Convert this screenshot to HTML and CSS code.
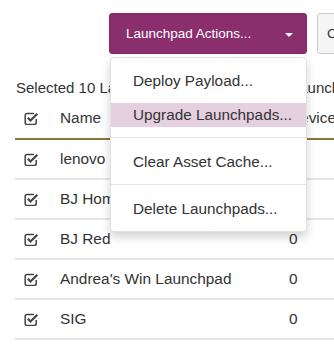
FILE: index.html
```html
<!DOCTYPE html>
<html lang="en">
<head>
    <meta charset="UTF-8">
    <title>Launchpads</title>
    <link rel="stylesheet" href="styles.css">
</head>
<body>
    <div class="page">
        <div class="toolbar">
            <div class="actions">
                <button class="btn btn-primary">
                    <span class="btn-label">Launchpad Actions...</span>
                    <span class="caret"></span>
                </button>
                <ul class="menu">
                    <li class="menu-item">Deploy Payload...</li>
                    <li class="menu-item active">Upgrade Launchpads...</li>
                    <li class="divider"></li>
                    <li class="menu-item">Clear Asset Cache...</li>
                    <li class="divider"></li>
                    <li class="menu-item">Delete Launchpads...</li>
                </ul>
            </div>
            <button class="btn btn-default">Columns</button>
        </div>

        <p class="status">Selected 10 Launchpads. Select all 1157 Launchpads</p>

        <table class="grid">
            <thead>
                <tr>
                    <th class="col-check"><span class="check"></span></th>
                    <th class="col-name">Name</th>
                    <th class="col-num">Devices</th>
                </tr>
            </thead>
            <tbody>
                <tr><td class="col-check"><span class="check"></span></td><td>lenovo</td><td>0</td></tr>
                <tr><td class="col-check"><span class="check"></span></td><td>BJ Home</td><td>0</td></tr>
                <tr><td class="col-check"><span class="check"></span></td><td>BJ Red</td><td>0</td></tr>
                <tr><td class="col-check"><span class="check"></span></td><td>Andrea's Win Launchpad</td><td>0</td></tr>
                <tr><td class="col-check"><span class="check"></span></td><td>SIG</td><td>0</td></tr>
            </tbody>
        </table>
    </div>

    <script>
        // checkbox glyph, same for every row
        const checkSvg = '<svg width="15" height="13" viewBox="0 0 15 13">' +
            '<path d="M10 1.5H3a1.8 1.8 0 0 0-1.8 1.8v7.4a1.8 1.8 0 0 0 1.8 1.8h7.4a1.8 1.8 0 0 0 1.8-1.8V7" fill="none" stroke="#444" stroke-width="1.5"/>' +
            '<path d="M3.8 5.8l2.7 2.7 6.8-6.8" fill="none" stroke="#444" stroke-width="2.2"/>' +
            '</svg>';
        document.querySelectorAll('.check').forEach(el => el.innerHTML = checkSvg);
    </script>
</body>
</html>
```

FILE: styles.css
```css
* {
    margin: 0;
    padding: 0;
    box-sizing: border-box;
}

body {
    font-family: 'Liberation Sans', Arial, sans-serif;
    color: #333;
    background: #fff;
    overflow: hidden;
}

.page {
    padding-top: 13px;
}

.toolbar {
    display: flex;
    gap: 10px;
    padding-left: 109px;
}

.actions {
    position: relative;
}

.btn {
    height: 41px;
    border-radius: 3px;
    font-family: 'Liberation Sans', Arial, sans-serif;
    font-size: 13.5px;
    white-space: nowrap;
}

.btn-primary {
    width: 198px;
    display: flex;
    align-items: center;
    padding: 0 13px 0 16px;
    background: #8a2e6d;
    border: 1px solid #832a67;
    color: #fff;
}

.btn-label {
    flex: 1;
    text-align: left;
}

.caret {
    width: 0;
    height: 0;
    border-left: 4px solid transparent;
    border-right: 4px solid transparent;
    border-top: 4px solid #fff;
    margin-top: 2px;
}

.btn-default {
    padding: 0 9px;
    background: #f5f5f5;
    border: 1px solid #ccc;
    color: #333;
}

.menu {
    position: absolute;
    top: 44px;
    left: 1px;
    width: 197px;
    list-style: none;
    background: #fff;
    border: 1px solid #e2e2e2;
    border-radius: 4px;
    box-shadow: 0 5px 10px rgba(0, 0, 0, 0.18);
    padding: 11px 0 10px;
    z-index: 2;
}

.menu-item {
    height: 24px;
    line-height: 24px;
    padding-left: 22px;
    font-size: 15.3px;
    color: #333;
    white-space: nowrap;
}

.menu-item + .menu-item {
    margin-top: 10px;
}

.menu-item.active {
    background: #e5d0e0;
}

.divider {
    height: 1px;
    background: #e5e5e5;
    margin: 10px 0 12px;
}

.status {
    margin: 23px 0 0 16px;
    height: 21px;
    line-height: 21px;
    font-size: 15px;
    white-space: nowrap;
}

.grid {
    margin-left: 15px;
    width: 420px;
    border-collapse: collapse;
    font-size: 15.4px;
}

.grid th,
.grid td {
    text-align: left;
    font-weight: normal;
    white-space: nowrap;
    padding: 0;
}

.grid th {
    height: 41px;
    border-bottom: 2px solid #8c7538;
}

.grid td {
    height: 40px;
    border-bottom: 2px solid #e6e6e6;
}

.col-check {
    width: 45px;
    padding-left: 9px !important;
}

.col-name {
    width: 229px;
}

.check {
    display: inline-flex;
    vertical-align: middle;
}
```
